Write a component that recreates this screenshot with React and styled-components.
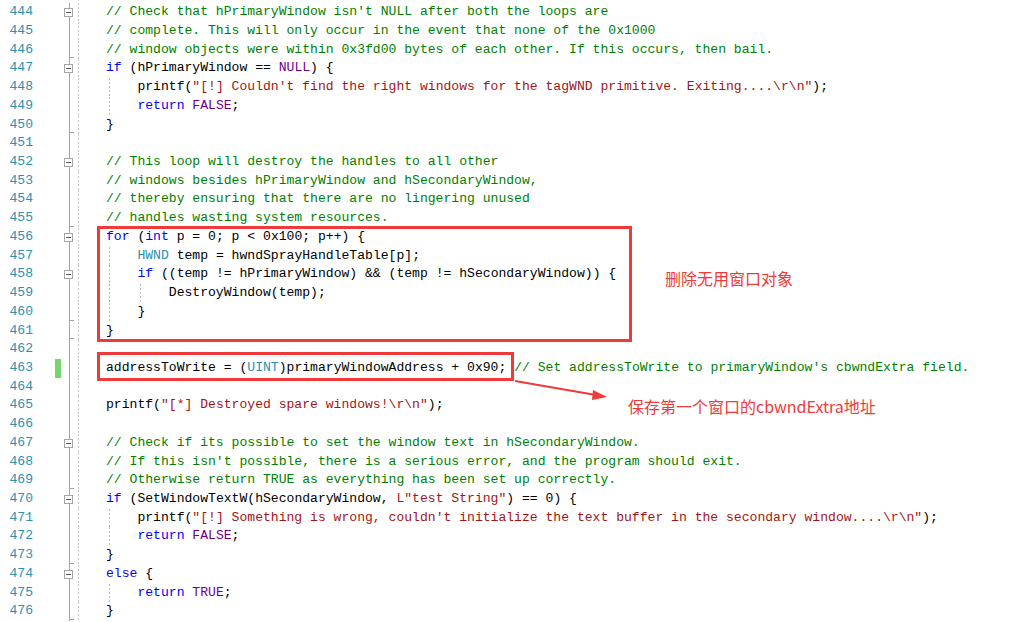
import styled, { createGlobalStyle } from "styled-components";

const LINE = 18.72;
const CH = 7.85;

const Global = createGlobalStyle`
  html, body {
    margin: 0;
    padding: 0;
    background: #ffffff;
    overflow: hidden;
  }
`;

const Editor = styled.div`
  position: relative;
  width: 1015px;
  height: 622px;
  padding-top: 3.3px;
  box-sizing: border-box;
  background: #ffffff;
  font-family: "Liberation Mono", "DejaVu Sans Mono", monospace;
  font-size: 13.08px;
`;

const Row = styled.div`
  display: flex;
  height: ${LINE}px;
  line-height: ${LINE}px;
  white-space: pre;
`;

const LineNo = styled.div`
  width: 36px;
  padding-right: 3px;
  box-sizing: border-box;
  text-align: right;
  color: #2b91af;
  flex: none;
`;

const Change = styled.div`
  width: 27px;
  flex: none;
  display: flex;
  justify-content: flex-end;
  padding-right: 2px;
  box-sizing: border-box;
  &::after {
    content: "";
    width: 6px;
    height: 100%;
    background: ${(p) => (p.$on ? "#72d86c" : "transparent")};
  }
`;

const Fold = styled.div`
  position: relative;
  width: 15px;
  flex: none;
  background: linear-gradient(#a5a5a5, #a5a5a5) no-repeat 6px 0 / 1px 100%;
  &::after {
    content: "";
    display: ${(p) => (p.$end ? "block" : "none")};
    position: absolute;
    left: 6px;
    bottom: 1px;
    width: 5px;
    height: 1px;
    background: #a5a5a5;
  }
`;

const FoldBox = styled.span`
  position: absolute;
  left: 1px;
  top: 5px;
  width: 9px;
  height: 9px;
  box-sizing: border-box;
  border: 1px solid #a5a5a5;
  background: #ffffff;
  &::after {
    content: "";
    position: absolute;
    left: 1px;
    top: 3px;
    width: 5px;
    height: 1px;
    background: #555;
  }
`;

const Code = styled.div`
  flex: 1;
  padding-left: 28px;
  background: repeating-linear-gradient(
      to bottom,
      #c8c8c8 0 2px,
      transparent 2px 4px
    )
    no-repeat 0 0 / 1px 100%;
  color: #000000;
`;

const Indent = styled.span`
  display: inline-block;
  width: ${CH * 4}px;
  height: ${LINE}px;
  vertical-align: top;
  background: repeating-linear-gradient(
      to bottom,
      #bdbdbd 0 2px,
      transparent 2px 4px
    )
    no-repeat 3px 0 / 1px 100%;
`;

const Tok = styled.span`
  color: ${(p) => p.$c};
`;

// anotaciones en rojo encima del código
const Marco = styled.div`
  position: absolute;
  left: ${(p) => p.$x}px;
  top: ${(p) => p.$y}px;
  width: ${(p) => p.$w}px;
  height: ${(p) => p.$h}px;
  border: 3px solid #f03a3a;
  box-sizing: border-box;
  pointer-events: none;
`;

const Nota = styled.div`
  position: absolute;
  left: ${(p) => p.$x}px;
  top: ${(p) => p.$y}px;
  color: #f03a3a;
  font-family: "Noto Sans CJK SC", "Noto Sans", sans-serif;
  font-size: 16px;
  line-height: 20px;
  white-space: nowrap;
`;

const Flecha = styled.svg`
  position: absolute;
  left: 0;
  top: 0;
  overflow: visible;
`;

const colors = {
  comment: "#008000",
  string: "#a31515",
  keyword: "#0000ff",
  macro: "#6f008a",
  type: "#2b91af",
  plain: "#000000",
};

const keywords = ["if", "for", "int", "return", "else"];
const macros = ["NULL", "FALSE", "TRUE"];
const types = ["HWND", "UINT"];

const tokenize = (src) => {
  const out = [];
  const re = /(\/\/.*$)|(L?"(?:[^"\\]|\\.)*")|([A-Za-z_]\w*)|([^A-Za-z_"\/]+|\/)/g;
  let m;
  while ((m = re.exec(src))) {
    if (m[1]) out.push(["comment", m[1]]);
    else if (m[2]) out.push(["string", m[2]]);
    else if (m[3]) {
      const w = m[3];
      if (keywords.includes(w)) out.push(["keyword", w]);
      else if (macros.includes(w)) out.push(["macro", w]);
      else if (types.includes(w)) out.push(["type", w]);
      else out.push(["plain", w]);
    } else out.push(["plain", m[4]]);
  }
  return out;
};

// [numero, nivel, texto, plegado, fin]
const lineas = [
  [444, 0, "// Check that hPrimaryWindow isn't NULL after both the loops are", true],
  [445, 0, "// complete. This will only occur in the event that none of the 0x1000"],
  [446, 0, "// window objects were within 0x3fd00 bytes of each other. If this occurs, then bail.", false, true],
  [447, 0, "if (hPrimaryWindow == NULL) {", true],
  [448, 1, 'printf("[!] Couldn\'t find the right windows for the tagWND primitive. Exiting....\\r\\n");'],
  [449, 1, "return FALSE;"],
  [450, 0, "}", false, true],
  [451, 0, ""],
  [452, 0, "// This loop will destroy the handles to all other", true],
  [453, 0, "// windows besides hPrimaryWindow and hSecondaryWindow,"],
  [454, 0, "// thereby ensuring that there are no lingering unused"],
  [455, 0, "// handles wasting system resources.", false, true],
  [456, 0, "for (int p = 0; p < 0x100; p++) {", true],
  [457, 1, "HWND temp = hwndSprayHandleTable[p];"],
  [458, 1, "if ((temp != hPrimaryWindow) && (temp != hSecondaryWindow)) {", true],
  [459, 2, "DestroyWindow(temp);"],
  [460, 1, "}", false, true],
  [461, 0, "}", false, true],
  [462, 0, ""],
  [463, 0, "addressToWrite = (UINT)primaryWindowAddress + 0x90; // Set addressToWrite to primaryWindow's cbwndExtra field."],
  [464, 0, ""],
  [465, 0, 'printf("[*] Destroyed spare windows!\\r\\n");'],
  [466, 0, ""],
  [467, 0, "// Check if its possible to set the window text in hSecondaryWindow.", true],
  [468, 0, "// If this isn't possible, there is a serious error, and the program should exit."],
  [469, 0, "// Otherwise return TRUE as everything has been set up correctly.", false, true],
  [470, 0, 'if (SetWindowTextW(hSecondaryWindow, L"test String") == 0) {', true],
  [471, 1, 'printf("[!] Something is wrong, couldn\'t initialize the text buffer in the secondary window....\\r\\n");'],
  [472, 1, "return FALSE;"],
  [473, 0, "}", false, true],
  [474, 0, "else {", true],
  [475, 1, "return TRUE;"],
  [476, 0, "}", false, true],
];

const App = () => {
  return (
    <Editor>
      <Global />
      {lineas.map(([num, nivel, texto, plegado, fin]) => (
        <Row key={num}>
          <LineNo>{num}</LineNo>
          <Change $on={num === 463} />
          <Fold $end={fin}>{plegado && <FoldBox />}</Fold>
          <Code>
            {Array.from({ length: nivel }).map((_, i) => (
              <Indent key={i} />
            ))}
            {tokenize(texto).map(([tipo, t], i) => (
              <Tok key={i} $c={colors[tipo]}>
                {t}
              </Tok>
            ))}
          </Code>
        </Row>
      ))}

      <Marco $x={97} $y={226} $w={535} $h={116} />
      <Marco $x={97} $y={352} $w={417} $h={29} />
      <Nota $x={665} $y={268}>删除无用窗口对象</Nota>
      <Nota $x={628} $y={396}>保存第一个窗口的cbwndExtra地址</Nota>

      <Flecha width="1015" height="622">
        <line x1="515" y1="381" x2="596" y2="395" stroke="#f03a3a" strokeWidth="2" />
        <polygon points="607,397 593,390 592,400" fill="#f03a3a" />
      </Flecha>
    </Editor>
  );
};

export default App;
